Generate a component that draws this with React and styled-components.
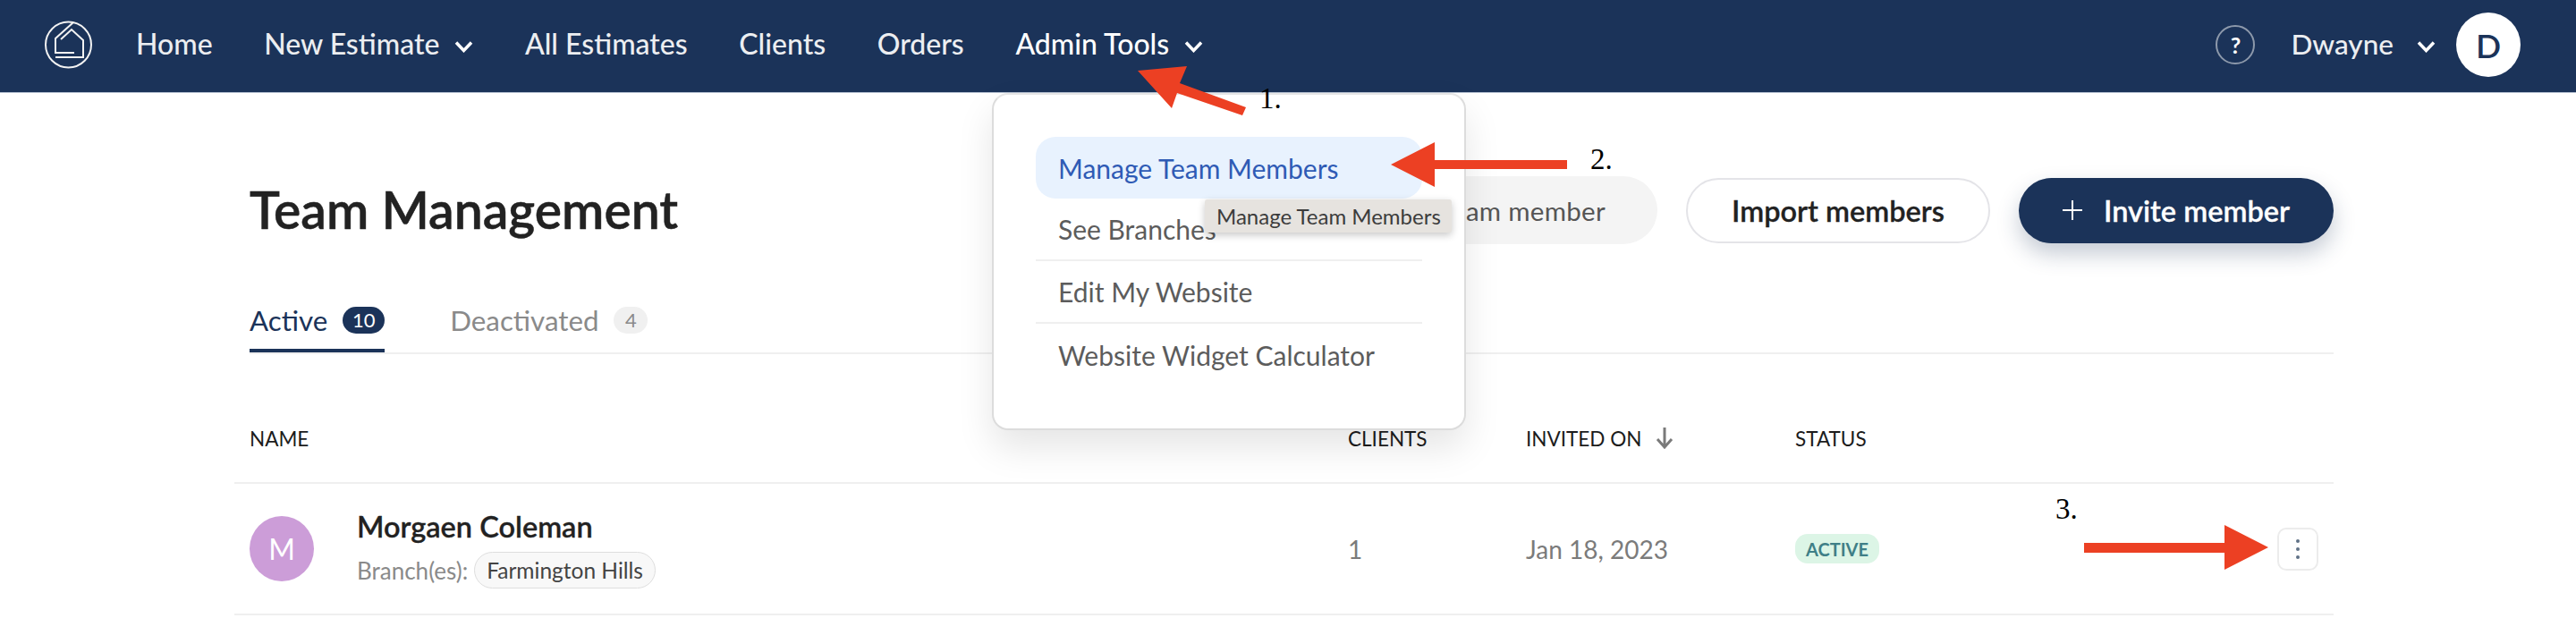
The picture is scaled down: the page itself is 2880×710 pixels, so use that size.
import React from 'react';
import styled, { createGlobalStyle } from 'styled-components';

const GlobalStyle = createGlobalStyle`
  html, body {
    margin: 0;
    padding: 0;
    background: #fff;
    font-family: "Lato", "Liberation Sans", sans-serif;
  }
  * { box-sizing: border-box; }
`;

const navy = '#1b3359';

const Page = styled.div`
  position: relative;
  width: 2880px;
  height: 710px;
  overflow: hidden;
`;

const Header = styled.header`
  display: flex;
  align-items: center;
  height: 104px;
  padding: 0 62px 3px 50px;
  background: ${navy};
  border-bottom: 1px solid #b9c4d4;
`;

const Logo = styled.svg`
  width: 54px;
  height: 54px;
  margin-right: 48px;
  flex: none;
`;

const Nav = styled.nav`
  display: flex;
  align-items: center;
  gap: 57.6px;
  flex: 1;
`;

const NavItem = styled.span`
  display: flex;
  align-items: center;
  gap: 17px;
  padding-bottom: 3px;
  font-size: 32px;
  font-weight: 500;
  color: ${p => (p.$bright ? '#fff' : '#eceef1')};
`;

const Chevron = styled.svg`
  width: 21px;
  height: 14px;
  margin-top: 7px;
`;

const UserArea = styled.div`
  display: flex;
  align-items: center;
`;

const HelpCircle = styled.span`
  display: flex;
  align-items: center;
  justify-content: center;
  width: 44px;
  height: 44px;
  margin-right: 40px;
  border: 2px solid #8d99ab;
  border-radius: 50%;
  color: #fff;
  font-size: 25px;
  font-weight: 700;
`;

const UserName = styled(NavItem)`
  gap: 26px;
  margin-right: 23px;
  font-size: 31.5px;
`;

const UserAvatar = styled.span`
  display: flex;
  align-items: center;
  justify-content: center;
  width: 72px;
  height: 72px;
  border-radius: 50%;
  background: #fff;
  color: ${navy};
  font-size: 37px;
  font-weight: 600;
`;

const Content = styled.main`
  width: 2347px;
  margin-left: 262px;
`;

const TitleRow = styled.div`
  display: flex;
  align-items: center;
  justify-content: space-between;
  height: 76px;
  margin-top: 93px;
  padding-left: 17px;
`;

const Title = styled.h1`
  margin: 0;
  padding-bottom: 3px;
  font-size: 57px;
  font-weight: 600;
  color: #222;
  -webkit-text-stroke: 0.5px #222;
`;

const Actions = styled.div`
  display: flex;
  align-items: center;
  gap: 32px;
`;

const SearchBox = styled.div`
  display: flex;
  align-items: center;
  justify-content: flex-end;
  width: 500px;
  height: 76px;
  padding-right: 58px;
  border-radius: 38px;
  background: #f4f4f4;
  font-size: 29.5px;
  letter-spacing: 0.3px;
  color: #555;
`;

const Button = styled.button`
  display: flex;
  align-items: center;
  justify-content: center;
  gap: 24px;
  width: ${p => p.$width}px;
  height: 73px;
  border-radius: 37px;
  border: ${p => (p.$primary ? 'none' : '2px solid #e4e4e8')};
  background: ${p => (p.$primary ? navy : '#fff')};
  color: ${p => (p.$primary ? '#fff' : '#222')};
  font-family: inherit;
  font-size: 32.5px;
  font-weight: 600;
  -webkit-text-stroke: 0.3px currentColor;
  box-shadow: ${p => (p.$primary ? '0 12px 24px rgba(27, 51, 89, 0.25)' : 'none')};
`;

const Tabs = styled.div`
  display: flex;
  gap: 73px;
  height: 53px;
  margin-top: 70px;
  margin-left: 17px;
  border-bottom: 2px solid #efefef;
`;

const Tab = styled.div`
  display: flex;
  align-items: flex-start;
  gap: 17px;
  height: 51px;
  font-size: 31.3px;
  line-height: 30px;
  color: ${p => (p.$active ? navy : '#8a8a8a')};
  border-bottom: ${p => (p.$active ? `4px solid ${navy}` : 'none')};
`;

const TabCount = styled.span`
  display: flex;
  align-items: center;
  justify-content: center;
  min-width: ${p => (p.$active ? 47 : 38)}px;
  height: 30px;
  border-radius: 15px;
  background: ${p => (p.$active ? navy : '#f0f0f0')};
  color: ${p => (p.$active ? '#fff' : '#8a8a8a')};
  font-size: 22px;
`;

const TableGrid = styled.div`
  display: grid;
  grid-template-columns: 1228px 199px 301px 1fr;
  align-items: center;
  padding-left: 17px;
  border-bottom: 2px solid #efefef;
`;

const HeadRow = styled(TableGrid)`
  height: 145px;
  padding-top: 45px;
`;

const HeadCell = styled.span`
  display: flex;
  align-items: center;
  gap: 16px;
  font-size: 22.5px;
  color: #1c1c1c;
`;

const BodyRow = styled(TableGrid)`
  height: 147px;
`;

const NameCell = styled.div`
  display: flex;
  align-items: center;
  gap: 48px;
`;

const MemberAvatar = styled.span`
  display: flex;
  align-items: center;
  justify-content: center;
  width: 72px;
  height: 73px;
  border-radius: 50%;
  background: #cc9dd8;
  color: #fff;
  font-size: 32px;
`;

const MemberName = styled.div`
  font-size: 32.5px;
  font-weight: 600;
  color: #222;
  -webkit-text-stroke: 0.3px #222;
`;

const BranchLine = styled.div`
  display: flex;
  align-items: center;
  gap: 7px;
  margin-top: 9px;
  font-size: 26px;
  color: #8a8a8a;
`;

const Chip = styled.span`
  padding: 5px 13px;
  border: 1px solid #dedede;
  border-radius: 21px;
  background: #f8f8f8;
  color: #444;
  font-size: 24.5px;
`;

const MutedCell = styled.span`
  font-size: 28px;
  color: #7b7b7b;
`;

const StatusCell = styled.div`
  display: flex;
  align-items: center;
  justify-content: space-between;
  padding-right: 17px;
`;

const StatusBadge = styled.span`
  display: flex;
  align-items: center;
  justify-content: center;
  width: 94px;
  height: 33px;
  border-radius: 14px;
  background: #dcf5e6;
  color: #3f7f87;
  font-size: 20px;
  font-weight: 700;
`;

const KebabButton = styled.button`
  display: flex;
  flex-direction: column;
  align-items: center;
  justify-content: center;
  gap: 5px;
  width: 46px;
  height: 48px;
  padding: 0;
  border: 2px solid #ececec;
  border-radius: 10px;
  background: #fff;
`;

const KebabDot = styled.i`
  width: 4px;
  height: 4px;
  border-radius: 50%;
  background: #5f7186;
`;

/* the open menu and tooltip sit over the page */
const Menu = styled.div`
  position: absolute;
  left: 1109px;
  top: 104px;
  width: 530px;
  height: 377px;
  padding: 47px 47px 0;
  background: #fff;
  border: 2px solid #dcdcdc;
  border-top-color: #e6e6e6;
  border-radius: 18px;
  box-shadow: 0 20px 40px rgba(0, 0, 0, 0.1);
`;

const MenuItem = styled.div`
  display: flex;
  align-items: center;
  height: ${p => (p.$selected ? 69 : 70)}px;
  padding-left: 25px;
  font-size: 30px;
  color: ${p => (p.$selected ? '#2f5bb5' : '#5c5c5c')};
  background: ${p => (p.$selected ? '#e8f2fe' : 'none')};
  border-radius: ${p => (p.$selected ? '22px' : '0')};
  border-bottom: ${p => (p.$divided ? '2px solid #efefef' : 'none')};
`;

const Tooltip = styled.div`
  position: absolute;
  left: 236px;
  top: 117px;
  display: flex;
  align-items: center;
  width: 276px;
  height: 37px;
  padding-left: 13px;
  background: #e6e3df;
  border-radius: 3px;
  box-shadow: 0 3px 8px rgba(0, 0, 0, 0.22);
  font-size: 24px;
  color: #3c3c3c;
`;

/* hand-drawn callouts placed on top of the screenshot */
const Callout = styled.svg`
  position: absolute;
  left: 0;
  top: 0;
  pointer-events: none;
`;

const StepLabel = styled.span`
  position: absolute;
  left: ${p => p.$x}px;
  top: ${p => p.$y}px;
  font-family: "Liberation Serif", serif;
  font-size: 33px;
  line-height: 36px;
  color: #000;
`;

const ChevronDown = () => (
  <Chevron viewBox="0 0 21 14" fill="none" stroke="#fff" strokeWidth="3.5">
    <path d="M2 2.5l8.5 9 8.5-9" />
  </Chevron>
);

const arrows = [
  '1272,79 1327,74 1319,93 1393,120 1389,129 1316,104 1310,121',
  '1555,184 1604,159 1604,179 1752,179 1752,189 1604,189 1604,209',
  '2536,612 2487,587 2487,607 2330,607 2330,618 2487,618 2487,637',
];

const App = () => (
  <Page>
    <GlobalStyle />
    <Header>
      <Logo viewBox="0 0 54 54" fill="none" stroke="#f2f2f2" strokeWidth="2">
        <circle cx="26.5" cy="27" r="25.5" />
        <path d="M32 2L12 20v16h21" />
        <path d="M18 21l12-11 13 12v19H12" />
      </Logo>
      <Nav>
        <NavItem>Home</NavItem>
        <NavItem>New Estimate <ChevronDown /></NavItem>
        <NavItem>All Estimates</NavItem>
        <NavItem>Clients</NavItem>
        <NavItem>Orders</NavItem>
        <NavItem $bright>Admin Tools <ChevronDown /></NavItem>
      </Nav>
      <UserArea>
        <HelpCircle>?</HelpCircle>
        <UserName>Dwayne <ChevronDown /></UserName>
        <UserAvatar>D</UserAvatar>
      </UserArea>
    </Header>

    <Content>
      <TitleRow>
        <Title>Team Management</Title>
        <Actions>
          <SearchBox>Search team member</SearchBox>
          <Button $width={340}>Import members</Button>
          <Button $primary $width={352}>
            <svg width="22" height="22" viewBox="0 0 22 22" stroke="#fff" strokeWidth="2">
              <path d="M11 0v22M0 11h22" />
            </svg>
            Invite member
          </Button>
        </Actions>
      </TitleRow>

      <Tabs>
        <Tab $active>Active <TabCount $active>10</TabCount></Tab>
        <Tab>Deactivated <TabCount>4</TabCount></Tab>
      </Tabs>

      <HeadRow>
        <HeadCell>NAME</HeadCell>
        <HeadCell>CLIENTS</HeadCell>
        <HeadCell>
          INVITED ON
          <svg width="20" height="24" viewBox="0 0 20 24" fill="none" stroke="#7a7a7a" strokeWidth="3">
            <path d="M10 0v22M2 13l8 9 8-9" />
          </svg>
        </HeadCell>
        <HeadCell>STATUS</HeadCell>
      </HeadRow>

      <BodyRow>
        <NameCell>
          <MemberAvatar>M</MemberAvatar>
          <div>
            <MemberName>Morgaen Coleman</MemberName>
            <BranchLine>Branch(es): <Chip>Farmington Hills</Chip></BranchLine>
          </div>
        </NameCell>
        <MutedCell>1</MutedCell>
        <MutedCell>Jan 18, 2023</MutedCell>
        <StatusCell>
          <StatusBadge>ACTIVE</StatusBadge>
          <KebabButton><KebabDot /><KebabDot /><KebabDot /></KebabButton>
        </StatusCell>
      </BodyRow>
    </Content>

    <Menu>
      <MenuItem $selected>Manage Team Members</MenuItem>
      <MenuItem $divided>See Branches</MenuItem>
      <MenuItem $divided>Edit My Website</MenuItem>
      <MenuItem>Website Widget Calculator</MenuItem>
      <Tooltip>Manage Team Members</Tooltip>
    </Menu>

    <Callout width="2880" height="710" viewBox="0 0 2880 710" fill="#ec4023">
      {arrows.map(points => <polygon key={points} points={points} />)}
    </Callout>
    <StepLabel $x={1408} $y={92}>1.</StepLabel>
    <StepLabel $x={1778} $y={160}>2.</StepLabel>
    <StepLabel $x={2298} $y={551}>3.</StepLabel>
  </Page>
);

export default App;
